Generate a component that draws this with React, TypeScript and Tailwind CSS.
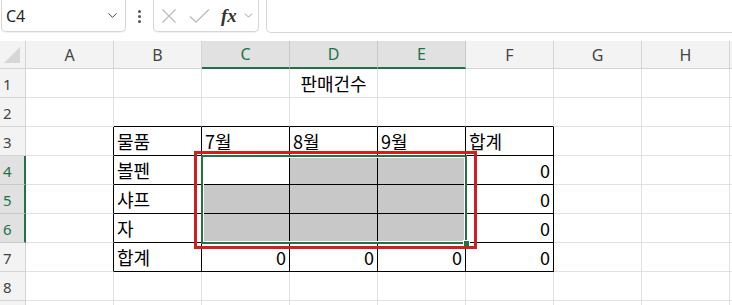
import { ChevronDown } from "lucide-react";

const cols = ["A", "B", "C", "D", "E", "F", "G", "H"];
const rows = [1, 2, 3, 4, 5, 6, 7, 8, 9];

type Cell = { text: string; align?: "left" | "right" | "center" };

const cells: Record<string, Cell> = {
  D1: { text: "판매건수", align: "center" },
  B3: { text: "물품" },
  C3: { text: "7월" },
  D3: { text: "8월" },
  E3: { text: "9월" },
  F3: { text: "합계" },
  B4: { text: "볼펜" },
  B5: { text: "샤프" },
  B6: { text: "자" },
  B7: { text: "합계" },
  F4: { text: "0", align: "right" },
  F5: { text: "0", align: "right" },
  F6: { text: "0", align: "right" },
  C7: { text: "0", align: "right" },
  D7: { text: "0", align: "right" },
  E7: { text: "0", align: "right" },
  F7: { text: "0", align: "right" },
};

const shaded = ["D4", "E4", "C5", "D5", "E5", "C6", "D6", "E6"];
const selCols = ["C", "D", "E"];
const selRows = [4, 5, 6];

// table B3:F7 has black borders
const inTable = (c: number, r: number) => c >= 1 && c <= 5 && r >= 3 && r <= 7;

function GridCell({ ci, r }: { ci: number; r: number }) {
  const key = cols[ci] + r;
  const cell = cells[key];
  const blackRight = inTable(ci, r) || inTable(ci + 1, r);
  const blackBottom = inTable(ci, r) || inTable(ci, r + 1);
  const bg = shaded.includes(key) ? "bg-[#c8c8c8]" : "bg-white";
  const align =
    cell?.align === "right"
      ? "justify-end pr-[3px]"
      : cell?.align === "center"
        ? "justify-center"
        : "justify-start pl-[3px]";
  return (
    <div
      className={`flex items-end pb-[2px] h-[29px] border-r border-b whitespace-nowrap overflow-visible text-[18px] leading-[24px] text-black ${bg} ${align} ${
        blackRight ? "border-r-black" : "border-r-[#e1e1e1]"
      } ${blackBottom ? "border-b-black" : "border-b-[#e1e1e1]"}`}
    >
      {cell?.text}
    </div>
  );
}

function FormulaBar() {
  return (
    <div className="flex items-start h-[41px] bg-white">
      <div className="ml-[1px] w-[125px] h-[32px] rounded-b-[5px] border border-t-0 border-[#d6d6d6] shadow-[0_1px_1px_rgba(0,0,0,0.06)] flex items-center justify-between pl-[4px] pr-[5px]">
        <span className="text-[16px] text-[#262626] font-['Noto_Sans',sans-serif] leading-none">C4</span>
        <ChevronDown size={15} strokeWidth={1.6} className="text-[#444]" />
      </div>
      <div className="w-[27px] h-[32px] flex flex-col items-center justify-center gap-[2px]">
        <span className="w-[3px] h-[3px] rounded-full bg-[#555]" />
        <span className="w-[3px] h-[3px] rounded-full bg-[#555]" />
        <span className="w-[3px] h-[3px] rounded-full bg-[#555]" />
      </div>
      <div className="w-[106px] h-[32px] rounded-b-[5px] border border-t-0 border-[#d6d6d6] shadow-[0_1px_1px_rgba(0,0,0,0.06)] flex items-center pl-[7px]">
        <svg width="16" height="16" viewBox="0 0 16 16" className="text-[#bdbdbd]">
          <path d="M1.5 1.5 L14.5 14.5 M14.5 1.5 L1.5 14.5" stroke="currentColor" strokeWidth="1.3" fill="none" />
        </svg>
        <svg width="21" height="16" viewBox="0 0 21 16" className="ml-[12px] text-[#bdbdbd]">
          <path d="M1 8.5 L7 14 L20 1.5" stroke="currentColor" strokeWidth="1.3" fill="none" />
        </svg>
        <span className="ml-[11px] text-[19px] italic font-bold text-[#333] font-['Liberation_Serif',serif] leading-none">
          fx
        </span>
        <ChevronDown size={13} strokeWidth={1.5} className="ml-[5px] text-[#888]" />
      </div>
      <div className="ml-[7px] flex-1 h-[33px] rounded-bl-[5px] border border-t-0 border-r-0 border-[#d6d6d6]" />
    </div>
  );
}

export default function App() {
  return (
    <div className="w-[732px] h-[305px] overflow-hidden bg-white font-['Noto_Sans_CJK_KR','Noto_Sans',sans-serif] select-none">
      <FormulaBar />
      <div className="relative">
        <div className="grid grid-cols-[26px_repeat(8,88px)_1fr]">
          {/* header row */}
          <div className="h-[28px] bg-[#f3f3f3] border-r border-b border-[#d4d4d4] relative">
            <svg width="18" height="18" viewBox="0 0 18 18" className="absolute right-[4px] bottom-[4px]">
              <path d="M17 1 L17 17 L1 17 Z" fill="#d6d6d6" />
            </svg>
          </div>
          {cols.map((c) => {
            const sel = selCols.includes(c);
            return (
              <div
                key={c}
                className={`h-[28px] flex items-center justify-center text-[16px] font-['Noto_Sans',sans-serif] border-r ${
                  sel
                    ? "bg-[#e1e1e1] text-[#217346] border-b-2 border-b-[#217346] border-r-[#c8c8c8]"
                    : "bg-[#f3f3f3] text-[#444] border-b border-b-[#d4d4d4] border-r-[#d4d4d4]"
                }`}
              >
                {c}
              </div>
            );
          })}
          <div className="h-[28px] bg-[#f3f3f3] border-b border-[#d4d4d4]" />

          {rows.map((r) => {
            const sel = selRows.includes(r);
            return [
              <div
                key={"h" + r}
                className={`h-[29px] flex items-end pb-[3px] pl-[3px] text-[15px] leading-[20px] font-['Noto_Sans',sans-serif] border-b ${
                  sel
                    ? "bg-[#e1e1e1] text-[#217346] border-r-2 border-r-[#217346] border-b-[#c8c8c8]"
                    : "bg-[#f3f3f3] text-[#444] border-r border-r-[#d4d4d4] border-b-[#d4d4d4]"
                }`}
              >
                {r < 9 ? r : ""}
              </div>,
              ...cols.map((_, ci) => <GridCell key={cols[ci] + r} ci={ci} r={r} />),
              <div key={"z" + r} className="h-[29px] bg-white border-b border-[#e1e1e1]" />,
            ];
          })}
        </div>

        {/* selection C4:E6 */}
        <div className="absolute left-[201px] top-[114px] w-[266px] h-[89px] border-2 border-[#217346] pointer-events-none">
          <div className="absolute inset-0 border border-white" />
          <div className="absolute right-[-5px] bottom-[-5px] w-[7px] h-[7px] bg-[#217346] border border-white" />
        </div>

        {/* red highlight box */}
        <div className="absolute left-[194px] top-[110px] w-[283px] h-[98px] border-[3px] border-[#cf1f1f] pointer-events-none" />
      </div>
    </div>
  );
}
